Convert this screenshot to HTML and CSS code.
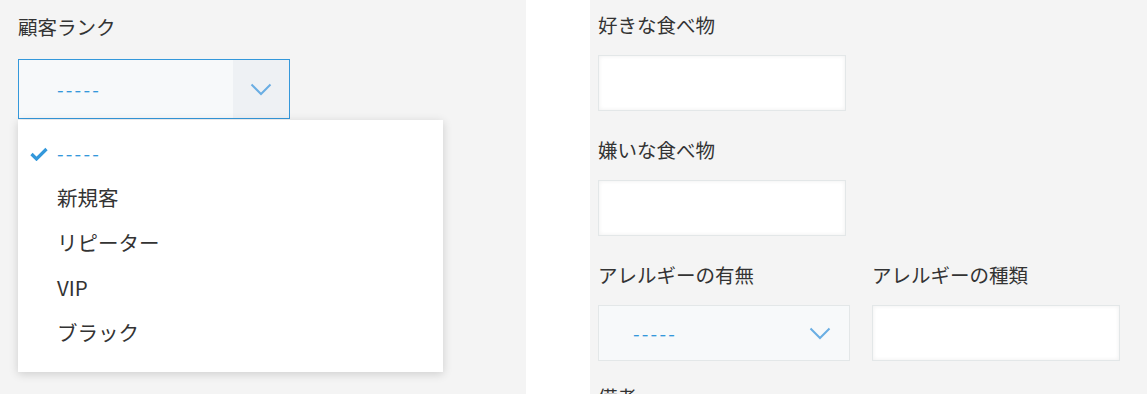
FILE: index.html
```html
<!DOCTYPE html>
<html lang="ja">
<head>
	<meta charset="utf-8">
	<title>顧客情報</title>
	<link rel="stylesheet" href="styles.css">
</head>
<body>
	<div class="page">
		<div class="panel left">
			<div class="field">
				<div class="label">顧客ランク</div>
				<div class="select focused">
					<span class="value">-----</span>
					<span class="arrow">
						<svg width="22" height="13" viewBox="0 0 22 13"><polyline points="1.5,1.5 11,11 20.5,1.5" fill="none" stroke="#6aaee3" stroke-width="2"/></svg>
					</span>
				</div>
				<ul class="menu">
					<li class="selected">
						<svg class="check" width="18" height="14" viewBox="0 0 18 14"><polyline points="1.5,7 6.5,12 16.5,2" fill="none" stroke="#3498db" stroke-width="3.2"/></svg>
						<span class="dash">-----</span>
					</li>
					<li>新規客</li>
					<li>リピーター</li>
					<li>VIP</li>
					<li>ブラック</li>
				</ul>
			</div>
		</div>
		<div class="gutter"></div>
		<div class="panel right">
			<div class="row">
				<div class="field">
					<div class="label">好きな食べ物</div>
					<div class="input"></div>
				</div>
			</div>
			<div class="row">
				<div class="field">
					<div class="label">嫌いな食べ物</div>
					<div class="input"></div>
				</div>
			</div>
			<div class="row">
				<div class="field">
					<div class="label">アレルギーの有無</div>
					<div class="select plain">
						<span class="value">-----</span>
						<span class="arrow">
							<svg width="22" height="13" viewBox="0 0 22 13"><polyline points="1.5,1.5 11,11 20.5,1.5" fill="none" stroke="#6aaee3" stroke-width="2"/></svg>
						</span>
					</div>
				</div>
				<div class="field">
					<div class="label">アレルギーの種類</div>
					<div class="input"></div>
				</div>
			</div>
			<div class="row last">
				<div class="field">
					<div class="label">備考</div>
				</div>
			</div>
		</div>
	</div>
</body>
</html>
```

FILE: styles.css
```css
html, body { margin: 0; padding: 0; }
body { font-family: "Noto Sans CJK JP", "Noto Sans", sans-serif; color: #333; background: #fff; height: 394px; overflow: hidden; }
.page { display: flex; height: 394px; overflow: hidden; }
.panel { background: #f4f4f4; box-sizing: border-box; }
.left { width: 526px; padding: 12px 0 0 18px; }
.gutter { width: 64px; background: #fff; }
.right { flex: 1; padding: 10px 0 0 8px; }

.field { position: relative; }
.label { font-size: 19.5px; line-height: 30px; white-space: nowrap; }

.select { display: flex; box-sizing: border-box; height: 60px; background: #f7f9fa; margin-top: 17px; }
.select .value { flex: 1; padding-left: 38px; line-height: 57px; color: #3498db; font-size: 19px; letter-spacing: 2.2px; }
.select .arrow { width: 56px; display: flex; align-items: center; justify-content: center; }
.focused { width: 272px; border: 1px solid #3498db; }
.focused .arrow { background: #eef1f4; }
.plain { width: 252px; height: 56px; margin-top: 15px; border: 1px solid #e3e7e8; }
.plain .value { line-height: 54px; padding-left: 34px; }
.plain .arrow { width: 58px; }

.menu { position: absolute; left: 0; top: 108px; width: 425px; margin: 0; padding: 10px 0 17px; list-style: none; background: #fff; box-shadow: 0 2px 9px rgba(0, 0, 0, 0.16); }
.menu li { height: 45px; line-height: 45px; padding-left: 39px; font-size: 20.5px; position: relative; }
.menu .check { position: absolute; left: 12px; top: 17px; }
.menu .dash { color: #3498db; font-size: 19px; letter-spacing: 2.2px; }

.row { display: flex; gap: 22px; margin-bottom: 24px; }
.row.last { margin-top: -3px; }
.input { width: 248px; height: 56px; box-sizing: border-box; margin-top: 15px; background: #fff; border: 1px solid #e3e7e8; box-shadow: inset 0 0 4px rgba(0, 0, 0, 0.07); }
```
